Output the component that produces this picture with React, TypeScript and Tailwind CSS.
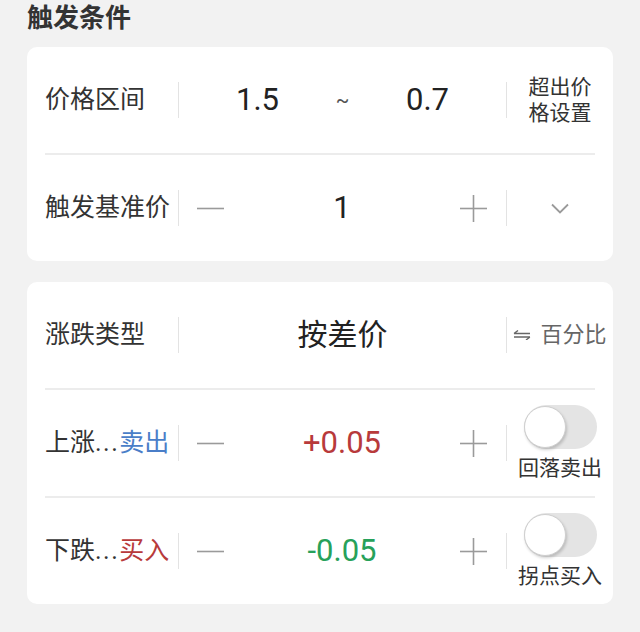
import React from "react";

const FONT = { fontFamily: 'Roboto, "Noto Sans CJK SC", sans-serif' };

function Sep() {
  return <div className="w-px h-[36px] bg-[#e3e3e3] shrink-0" />;
}

function Minus() {
  return (
    <svg width="27" height="27" viewBox="0 0 27 27">
      <line x1="0" y1="13.5" x2="27" y2="13.5" stroke="#9a9a9a" strokeWidth="1.6" />
    </svg>
  );
}

function Plus() {
  return (
    <svg width="27" height="27" viewBox="0 0 27 27">
      <line x1="0" y1="13.5" x2="27" y2="13.5" stroke="#9a9a9a" strokeWidth="1.6" />
      <line x1="13.5" y1="0" x2="13.5" y2="27" stroke="#9a9a9a" strokeWidth="1.6" />
    </svg>
  );
}

function Chevron() {
  return (
    <svg width="18" height="11" viewBox="0 0 18 11">
      <polyline points="1,1.5 9,9.5 17,1.5" fill="none" stroke="#9a9a9a" strokeWidth="1.8" />
    </svg>
  );
}

function Harpoons() {
  return (
    <svg width="18" height="10" viewBox="0 0 18 10">
      <path d="M1 3.5 H17 M1 3.5 L5 0.5" fill="none" stroke="#666" strokeWidth="1.4" />
      <path d="M1 7 H17 M17 7 L13 10" fill="none" stroke="#666" strokeWidth="1.4" />
    </svg>
  );
}

function Toggle({ label }: { label: string }) {
  return (
    <div className="flex flex-col items-center">
      <div className="relative w-[73px] h-[44px] rounded-full bg-[#e4e4e4]">
        <div className="absolute left-0 top-px w-[42px] h-[42px] rounded-full bg-white border border-[#cfcfcf] shadow-[1px_2px_3px_rgba(0,0,0,0.18)]" />
      </div>
      <div className="mt-[6px] text-[21px] leading-[26px] text-[#333]">{label}</div>
    </div>
  );
}

function Divider() {
  return <div className="mx-[18px] h-[2px] bg-[#ececec]" />;
}

function Row({
  label,
  center,
  right,
}: {
  label: React.ReactNode;
  center: React.ReactNode;
  right: React.ReactNode;
}) {
  return (
    <div className="flex items-center h-[106px] pl-[18px]">
      <div className="w-[133px] shrink-0 text-[25px] leading-[32px] text-[#333] whitespace-nowrap">{label}</div>
      <Sep />
      <div className="flex-1 flex items-center h-full">{center}</div>
      <Sep />
      <div className="w-[106px] shrink-0 flex justify-center items-center">{right}</div>
    </div>
  );
}

function Stepper({ value, color }: { value: string; color: string }) {
  return (
    <div className="flex-1 flex items-center justify-between pl-[18px] pr-[19px]">
      <Minus />
      <span className={`text-[31px] leading-[36px] ${color}`}>{value}</span>
      <Plus />
    </div>
  );
}

export default function App() {
  return (
    <div className="w-[640px] h-[632px] bg-[#f2f2f2] overflow-hidden" style={FONT}>
      <div className="pl-[27px] h-[37px] text-[26px] leading-[37px] font-bold text-[#333]">触发条件</div>
      <div className="mx-[27px] mt-[10px] bg-white rounded-[10px]">
        <Row
          label="价格区间"
          center={
            <div className="flex-1 flex justify-center items-center">
              <span className="w-[85px] text-center text-[31px] leading-[36px] text-[#222]">1.5</span>
              <span className="w-[85px] text-center text-[20px] leading-[36px] text-[#555]">~</span>
              <span className="w-[85px] text-center text-[31px] leading-[36px] text-[#222]">0.7</span>
            </div>
          }
          right={
            <div className="text-[21px] leading-[26px] text-[#333] text-center">
              <div>超出价</div>
              <div>格设置</div>
            </div>
          }
        />
        <Divider />
        <Row label="触发基准价" center={<Stepper value="1" color="text-[#222]" />} right={<Chevron />} />
      </div>
      <div className="mx-[27px] mt-[21px] bg-white rounded-[10px]">
        <Row
          label="涨跌类型"
          center={
            <div className="flex-1 text-center text-[30px] leading-[36px] text-[#222]">按差价</div>
          }
          right={
            <div className="flex items-center gap-[9px] text-[22px] leading-[28px] text-[#666] whitespace-nowrap">
              <Harpoons />
              <span>百分比</span>
            </div>
          }
        />
        <Divider />
        <Row
          label={
            <span>
              上涨<span className="tracking-[1.5px]">...</span><span className="text-[#4a7ec8]">卖出</span>
            </span>
          }
          center={<Stepper value="+0.05" color="text-[#b83a3b]" />}
          right={<Toggle label="回落卖出" />}
        />
        <Divider />
        <Row
          label={
            <span>
              下跌<span className="tracking-[1.5px]">...</span><span className="text-[#b83a3b]">买入</span>
            </span>
          }
          center={<Stepper value="-0.05" color="text-[#27a15a]" />}
          right={<Toggle label="拐点买入" />}
        />
      </div>
    </div>
  );
}
